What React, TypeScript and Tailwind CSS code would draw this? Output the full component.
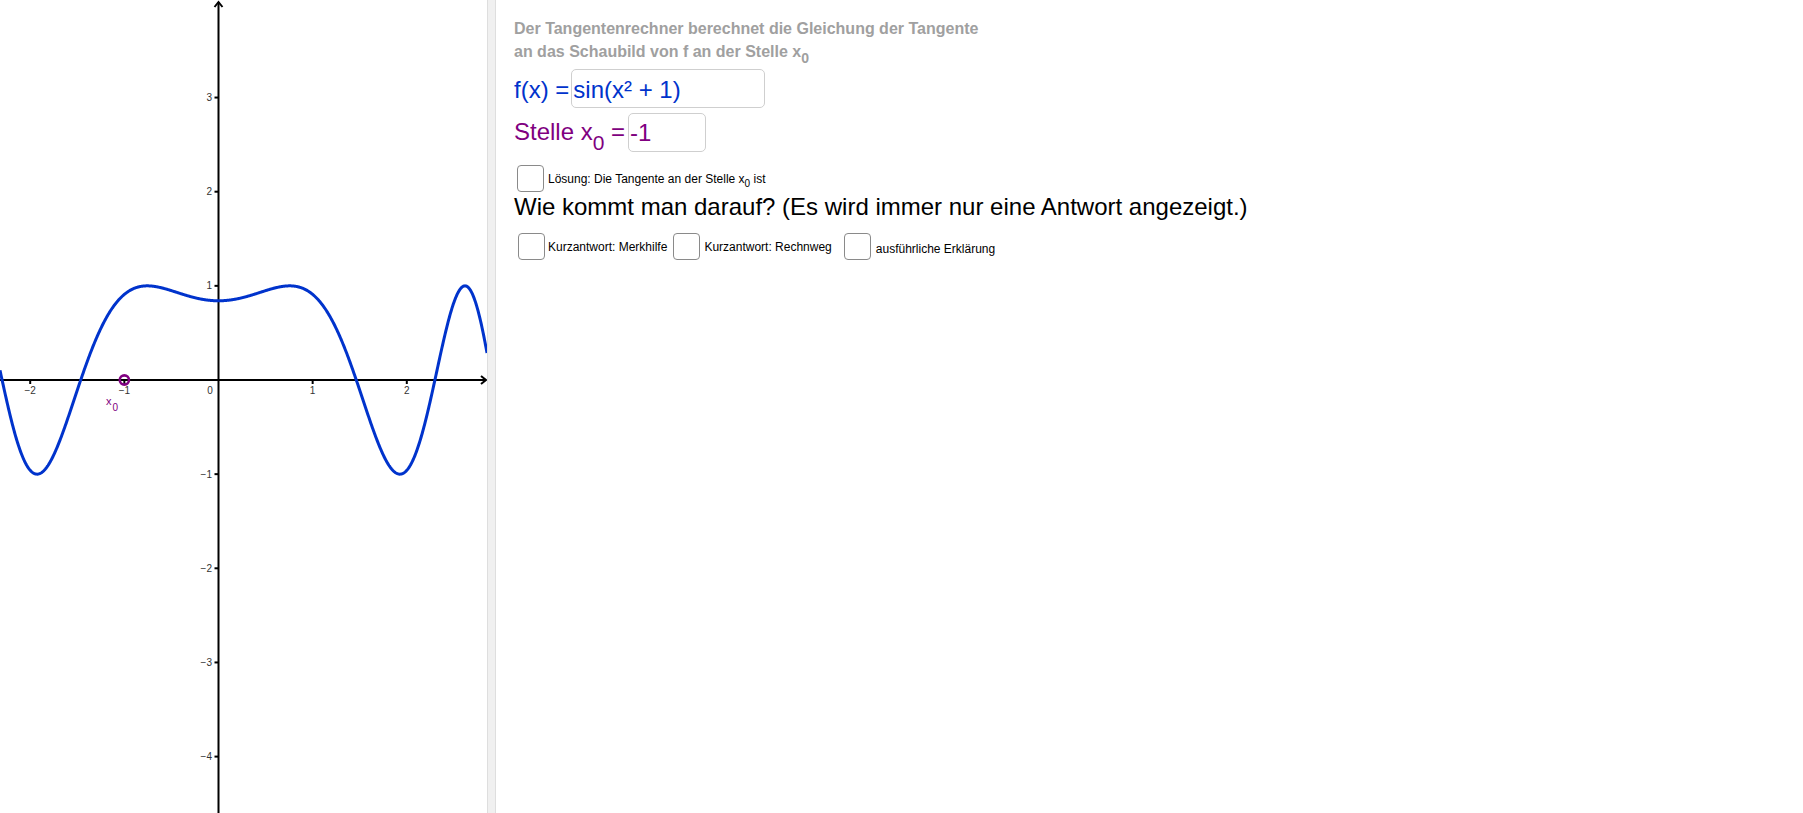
import React from 'react'

const FONT = { fontFamily: '"Liberation Sans", Arial, sans-serif' }

// graph geometry (px)
const W = 487
const H = 813
const OX = 218.5
const OY = 380
const U = 94.15

function curvePath() {
  const pts: string[] = []
  for (let px = 0; px <= W; px += 0.5) {
    const x = (px - OX) / U
    const y = Math.sin(x * x + 1)
    pts.push(`${px.toFixed(1)},${(OY - y * U).toFixed(2)}`)
  }
  return 'M' + pts.join(' L')
}

const xTicks = [-2, -1, 1, 2]
const yTicks = [3, 2, 1, -1, -2, -3, -4]

function Graph() {
  return (
    <div className="w-[487px] h-full shrink-0 overflow-hidden bg-white">
      <svg width={W} height={H} viewBox={`0 0 ${W} ${H}`} className="block">
        {/* axes */}
        <line x1={0} y1={OY} x2={W - 1} y2={OY} stroke="#000" strokeWidth={2} />
        <line x1={OX} y1={2} x2={OX} y2={H} stroke="#000" strokeWidth={2} />
        <polyline points={`${W - 6},${OY - 4} ${W - 1},${OY} ${W - 6},${OY + 4}`} fill="none" stroke="#000" strokeWidth={2} />
        <polyline points={`${OX - 4},7 ${OX},2 ${OX + 4},7`} fill="none" stroke="#000" strokeWidth={2} />

        {xTicks.map((t) => {
          const px = OX + t * U
          return (
            <g key={'x' + t}>
              <line x1={px} y1={OY} x2={px} y2={OY + 4} stroke="#000" strokeWidth={2} />
              <text x={px} y={OY + 14} fontSize={10} fill="#333" textAnchor="middle" style={FONT}>
                {t < 0 ? `\u2212${-t}` : t}
              </text>
            </g>
          )
        })}
        <text x={210} y={OY + 14} fontSize={10} fill="#333" textAnchor="middle" style={FONT}>0</text>

        {yTicks.map((t) => {
          const py = OY - t * U
          return (
            <g key={'y' + t}>
              <line x1={OX - 4} y1={py} x2={OX} y2={py} stroke="#000" strokeWidth={2} />
              <text x={212} y={py + 3.5} fontSize={10} fill="#333" textAnchor="end" style={FONT}>
                {t < 0 ? `\u2212${-t}` : t}
              </text>
            </g>
          )
        })}

        {/* f */}
        <path d={curvePath()} fill="none" stroke="#0033cc" strokeWidth={3} strokeLinejoin="round" />

        {/* point x0 */}
        <circle cx={OX - U} cy={OY} r={4.6} fill="none" stroke="#800080" strokeWidth={2.6} />
        <text x={106} y={405} fontSize={11} fill="#800080" style={FONT}>x</text>
        <text x={112.5} y={411} fontSize={10} fill="#800080" style={FONT}>0</text>
      </svg>
    </div>
  )
}

function Box({ className = '' }: { className?: string }) {
  return <div className={`w-[27px] h-[27px] shrink-0 border border-[#8a8a8a] rounded-[4px] bg-white ${className}`} />
}

export default function App() {
  return (
    <div className="flex w-full h-[813px] bg-white overflow-hidden" style={FONT}>
      <Graph />
      <div className="w-[9px] shrink-0 h-full bg-[#f0f0f0] border-l border-r border-[#dedede]" />

      <div className="flex-1 flex flex-col pl-[18px]">
        <div className="pt-[17px] text-[16px] leading-[23px] font-bold text-[#a0a0a0]">
          <div>Der Tangentenrechner berechnet die Gleichung der Tangente</div>
          <div>
            an das Schaubild von f an der Stelle x
            <span className="relative top-[6px] text-[14px] leading-none">0</span>
          </div>
        </div>

        <div className="mt-[6px] flex items-start h-[39px] text-[24px] text-[#0033cc]">
          <span className="leading-[41px] whitespace-pre">f(x) =</span>
          <div className="ml-[2px] w-[194px] h-[39px] border border-[#cfcfcf] rounded-[5px] pl-[1px] leading-[39px] overflow-hidden">
            sin(x² + 1)
          </div>
        </div>

        <div className="mt-[5px] flex items-start h-[39px] text-[24px] text-[#800080]">
          <span className="leading-[37px] whitespace-pre">
            Stelle x<span className="relative top-[10px] text-[21px] leading-none">0</span> =
          </span>
          <div className="ml-[3px] w-[78px] h-[39px] border border-[#cfcfcf] rounded-[5px] pl-[1px] leading-[37px] overflow-hidden">
            -1
          </div>
        </div>

        <div className="mt-[13px] flex items-center h-[27px] text-[12px] text-black">
          <Box className="ml-[3px]" />
          <span className="ml-[4px]">
            Lösung: Die Tangente an der Stelle x
            <span className="relative top-[4px] text-[10px] leading-none">0</span> ist
          </span>
        </div>

        <div className="mt-[1px] text-[24px] leading-[28px] text-black whitespace-nowrap">
          Wie kommt man darauf? (Es wird immer nur eine Antwort angezeigt.)
        </div>

        <div className="mt-[12px] flex items-center h-[27px] text-[12px] text-black whitespace-nowrap">
          <Box className="ml-[4px]" />
          <span className="ml-[3px]">Kurzantwort: Merkhilfe</span>
          <Box className="ml-[6px]" />
          <span className="ml-[4px]">Kurzantwort: Rechnweg</span>
          <Box className="ml-[12px]" />
          <span className="ml-[5px] relative top-[2px]">ausführliche Erklärung</span>
        </div>
      </div>
    </div>
  )
}
